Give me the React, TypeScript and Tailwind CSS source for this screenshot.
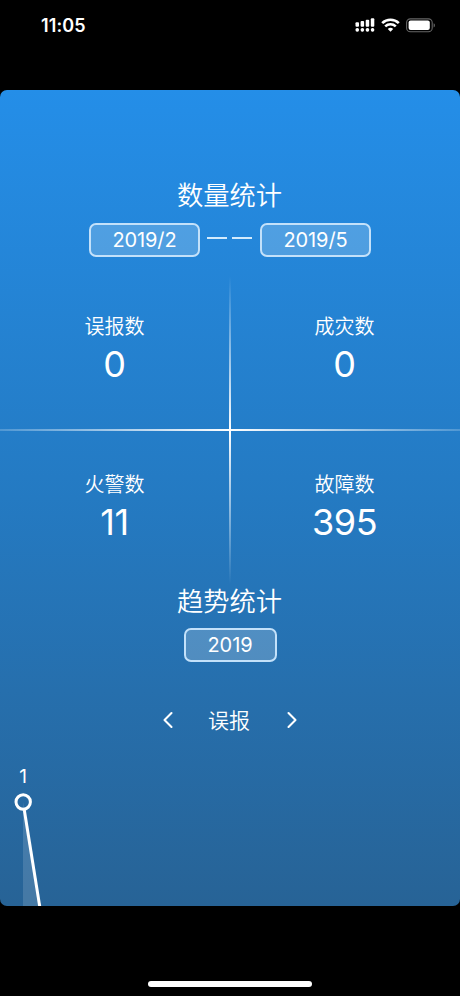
import { ChevronLeft, ChevronRight } from 'lucide-react'

interface StatCellProps {
  label: string
  value: number
}

const stats: StatCellProps[] = [
  { label: '误报数', value: 0 },
  { label: '成灾数', value: 0 },
  { label: '火警数', value: 11 },
  { label: '故障数', value: 395 },
]

// signal columns, shortest first
const bars = [
  { x: 0.5, top: 4.3 },
  { x: 5.6, top: 3 },
  { x: 10.7, top: 1.7 },
  { x: 15.8, top: 0.2 },
]

function StatusBar() {
  return (
    <header className="flex h-[90px] shrink-0 items-start justify-between pl-[41px] pr-[24px] pt-[14px]">
      <span className="text-[18px] font-semibold leading-[24px] tracking-[0.1px]">11:05</span>
      <div className="mt-[4px] flex items-start">
        <svg width="20" height="14" viewBox="0 0 20 14" fill="currentColor">
          {bars.map((b) => (
            <g key={b.x}>
              <rect x={b.x} y={b.top} width="3.5" height={8.8 - b.top} rx="1" />
              <rect x={b.x} y="9.9" width="3.5" height="3.8" rx="1.6" />
            </g>
          ))}
        </svg>
        <svg className="ml-[6px]" width="19" height="14" viewBox="0 0 19 14" fill="none" stroke="currentColor">
          <path d="M1.2 5.1a12 12 0 0 1 16.6 0" strokeWidth="2.7" />
          <path d="M4.2 8.4a7.7 7.7 0 0 1 10.6 0" strokeWidth="2.6" />
          <path d="M9.5 13.8 6.8 11.1a4 4 0 0 1 5.4 0Z" fill="currentColor" stroke="none" />
        </svg>
        <svg className="ml-[6px]" width="30" height="15" viewBox="0 0 30 15">
          <rect x="0.6" y="0.9" width="25.6" height="12.8" rx="3.8" fill="none" stroke="#666" strokeWidth="1.1" />
          <rect x="2.6" y="2.6" width="21.2" height="9.4" rx="2" fill="#fff" />
          <path d="M27.6 5.2c1.8.6 1.8 3.6 0 4.3Z" fill="#666" />
        </svg>
      </div>
    </header>
  )
}

function DateButton({ text, className }: { text: string; className: string }) {
  return (
    <button
      className={`h-[34px] rounded-[7px] border-2 border-[#c3e1fa] bg-white/20 text-[20px] leading-[30px] tracking-[-0.1px] ${className}`}
    >
      {text}
    </button>
  )
}

function StatCell({ label, value }: StatCellProps) {
  return (
    <div className="flex flex-col items-center pr-px pt-[40px]">
      <span className="text-[20px] font-[350] leading-[30px]">{label}</span>
      <span className="text-[36px] leading-[44px] tracking-[-0.4px]">{value}</span>
    </div>
  )
}

export default function App() {
  return (
    <div className="flex h-[996px] w-[460px] flex-col overflow-hidden bg-black font-['Inter','Noto_Sans_CJK_SC',sans-serif] text-white">
      <StatusBar />

      <main className="flex h-[816px] shrink-0 flex-col overflow-hidden rounded-[7px] bg-linear-to-b from-[#248ee8] via-[#247ac2] to-[#276396] pt-[87px]">
        <h2 className="pr-px text-center text-[26.3px] font-[350] leading-[38px]">数量统计</h2>
        <div className="mt-[8px] flex items-center justify-center">
          <DateButton text="2019/2" className="w-[111px]" />
          <div className="ml-[7px] mr-[8px] mb-[5px] flex gap-[5px]">
            <i className="h-[2px] w-[20px] bg-[#d3ebfd]" />
            <i className="h-[2px] w-[20px] bg-[#d3ebfd]" />
          </div>
          <DateButton text="2019/5" className="w-[111px]" />
        </div>

        <section className="relative mt-[15px] grid h-[316px] shrink-0 grid-cols-2 grid-rows-2">
          {stats.map((s) => (
            <StatCell key={s.label} {...s} />
          ))}
          {/* faded cross between the four cells */}
          <div className="absolute inset-x-0 top-[157px] h-[2px] bg-linear-to-r from-white/20 via-white to-white/20" />
          <div className="absolute inset-y-[4px] left-[229px] w-[2px] bg-linear-to-b from-transparent via-white to-transparent" />
        </section>

        <h2 className="-mt-[5px] pr-px text-center text-[26.3px] font-[350] leading-[38px]">趋势统计</h2>
        <DateButton text="2019" className="mt-[7px] w-[93px] shrink-0 self-center" />

        <div className="mt-[42px] flex h-[32px] shrink-0 items-center justify-center">
          <ChevronLeft className="mb-px" size={28} strokeWidth={1.8} />
          <span className="ml-[26px] mr-[28px] pt-[2px] text-[21px] font-[350] leading-[32px]">误报</span>
          <ChevronRight className="mb-px" size={28} strokeWidth={1.8} />
        </div>

        <svg className="mt-auto shrink-0" width="460" height="146" viewBox="0 760 460 146">
          <path d="M23 802 40 906H23Z" fill="#fff" fillOpacity="0.14" />
          <path d="M24.3 810 40.3 910" stroke="#fff" strokeWidth="3" />
          <circle cx="23.2" cy="802" r="7.2" fill="none" stroke="#fff" strokeWidth="3" />
          <text x="23" y="783" fill="#fff" fontSize="19" textAnchor="middle">
            1
          </text>
        </svg>
      </main>

      <footer className="flex h-[90px] shrink-0 items-end justify-center pb-[9px]">
        <div className="h-[6px] w-[164px] rounded-full bg-white" />
      </footer>
    </div>
  )
}
